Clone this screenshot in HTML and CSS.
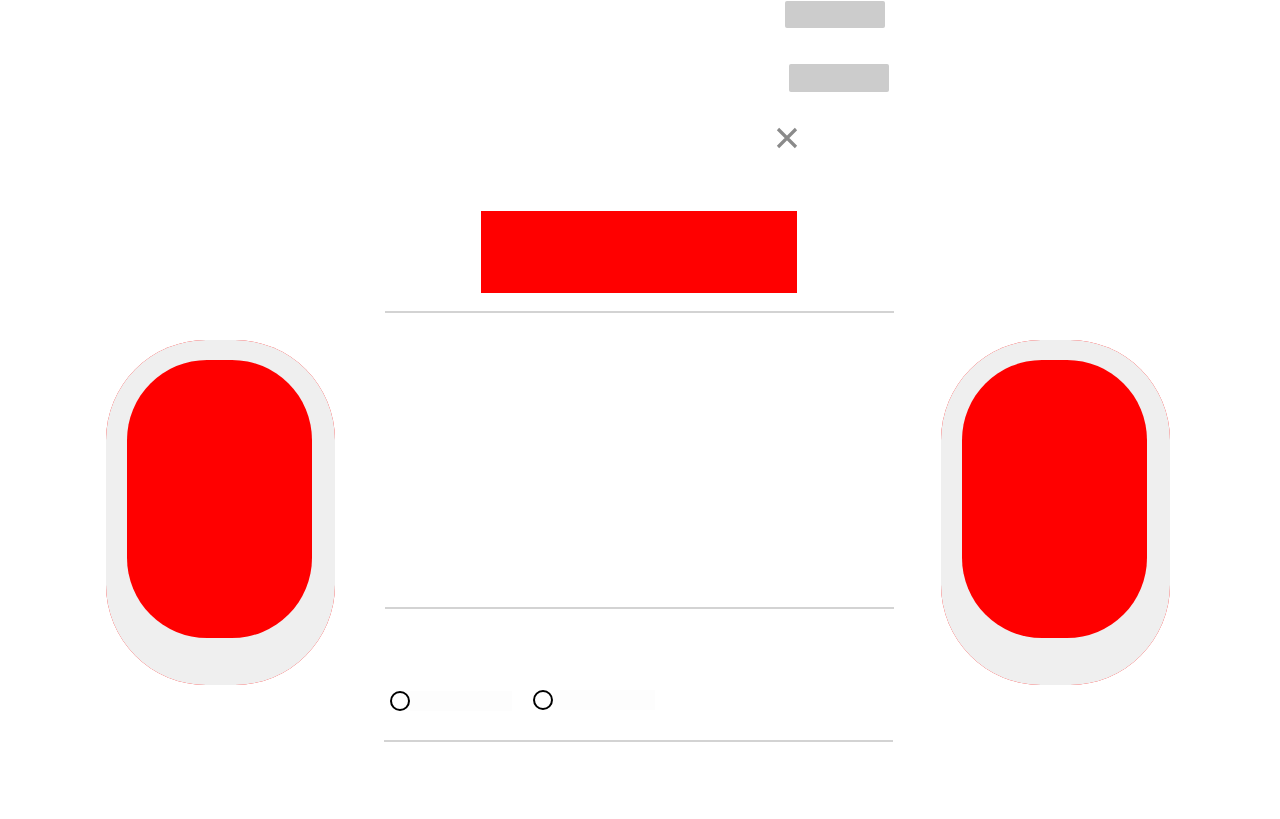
FILE: index.html
```html
<!DOCTYPE html>
<html>
<head>
<meta charset="utf-8">
<link rel="stylesheet" href="styles.css">
</head>
<body>
<div class="page">
  <div class="side side-left">
    <div class="side-fill">
      <div class="side-inner"></div>
    </div>
  </div>
  <div class="center">
    <div class="btn btn-one"></div>
    <div class="btn btn-two"></div>
    <div class="close">
      <svg width="24" height="24" viewBox="0 0 24 24"><path d="M3 3 L21 21 M21 3 L3 21" stroke="#8a8a8a" stroke-width="3.2" fill="none"/></svg>
    </div>
    <div class="banner"></div>
    <div class="rule rule-a"></div>
    <div class="rule rule-b"></div>
    <div class="radios">
      <div class="radio radio-a"><span class="dot"></span><span class="label"></span></div>
      <div class="radio radio-b"><span class="dot"></span><span class="label"></span></div>
    </div>
    <div class="rule rule-c"></div>
  </div>
  <div class="side side-right">
    <div class="side-fill">
      <div class="side-inner"></div>
    </div>
  </div>
</div>
</body>
</html>
```
FILE: styles.css
```css
html, body {
  margin: 0;
  padding: 0;
  background: #ffffff;
  font-family: "Liberation Sans", Arial, sans-serif;
}
.page {
  display: flex;
  align-items: flex-start;
  width: 1280px;
  height: 819px;
  overflow: hidden;
}
.side {
  width: 229px;
  height: 345px;
  margin-top: 340px;
  background: #ff0000;
  border-radius: 100px;
  flex: none;
}
.side-left { margin-left: 106px; }
.side-right { margin-left: 47px; }
.side-fill {
  width: 100%;
  height: 100%;
  background: #efefef;
  border-radius: 100px;
  padding: 20px 0 0 21px;
  box-sizing: border-box;
}
.side-inner {
  width: 185px;
  height: 278px;
  background: #ff0000;
  border-radius: 80px;
}
.center {
  width: 509px;
  margin-left: 50px;
  flex: none;
  display: flex;
  flex-direction: column;
}
.btn {
  width: 100px;
  height: 27px;
  background: #cccccc;
  border-radius: 2px;
}
.btn-one {
  margin-top: 1px;
  margin-left: 400px;
}
.btn-two {
  margin-top: 36px;
  margin-left: 404px;
  height: 28px;
}
.close {
  margin-top: 34px;
  margin-left: 390px;
  width: 24px;
  height: 24px;
}
.close svg { display: block; }
.banner {
  margin-top: 61px;
  margin-left: 96px;
  width: 316px;
  height: 82px;
  background: #ff0000;
}
.rule {
  height: 2px;
  background: #d3d3d3;
  width: 509px;
}
.rule-a { margin-top: 18px; }
.rule-b { margin-top: 294px; }
.radios {
  display: flex;
  margin-top: 82px;
  margin-left: 5px;
  gap: 21px;
  height: 20px;
}
.radio {
  display: flex;
  align-items: center;
  height: 20px;
}
.radio-b { margin-top: -1px; }
.dot {
  width: 20px;
  height: 20px;
  box-sizing: border-box;
  border: 2px solid #000;
  border-radius: 50%;
  flex: none;
}
.label {
  width: 102px;
  height: 20px;
  background: #fdfdfd;
}
.rule-c {
  margin-top: 29px;
  margin-left: -1px;
}
```
